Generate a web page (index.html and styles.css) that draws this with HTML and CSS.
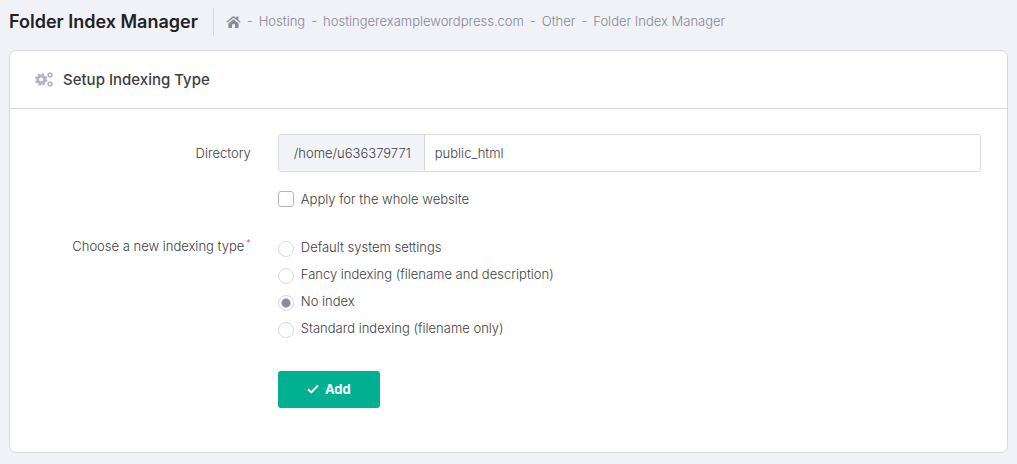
FILE: index.html
```html
<!DOCTYPE html>
<html lang="en">
<head>
    <meta charset="UTF-8">
    <meta name="viewport" content="width=device-width, initial-scale=1.0">
    <title>Folder Index Manager</title>
    <link rel="stylesheet" href="styles.css">
</head>
<body>

<header class="subheader">
    <h1 class="page-title">Folder Index Manager</h1>
    <nav class="breadcrumbs" aria-label="Breadcrumb">
        <a href="#" class="home-link" aria-label="Home">
            <svg class="home-icon" viewBox="0 0 16 13">
                <path d="M8 3.6 13.6 8.2V12.2Q13.6 13 12.8 13H9.6V9H6.4V13H3.2Q2.4 13 2.4 12.2V8.2Z"/>
                <path d="M8 0.2Q8.5 0.2 9 0.6L11 2.3V0.6H13.3V4.2L15.8 6.3 15 7.4 8 1.8 1 7.4 0.2 6.3 7 0.6Q7.5 0.2 8 0.2Z"/>
            </svg>
        </a>
        <span>-</span>
        <a href="#">Hosting</a>
        <span>-</span>
        <a href="#">hostingerexamplewordpress.com</a>
        <span>-</span>
        <a href="#">Other</a>
        <span>-</span>
        <a href="#">Folder Index Manager</a>
    </nav>
</header>

<main class="card">
    <div class="card-header">
        <svg class="cogs-icon" viewBox="0 0 18 15">
            <!-- big cog -->
            <circle cx="6.2" cy="7.5" r="3.5" fill="none" stroke-width="2.8"/>
            <circle cx="6.2" cy="7.5" r="5.3" fill="none" stroke-width="1.8" stroke-dasharray="2.5 1.66"/>
            <!-- small cogs -->
            <circle cx="15" cy="3" r="1.8" fill="none" stroke-width="1.4"/>
            <circle cx="15" cy="3" r="2.6" fill="none" stroke-width="0.8" stroke-dasharray="1.36 1.36"/>
            <circle cx="15" cy="12" r="1.8" fill="none" stroke-width="1.4"/>
            <circle cx="15" cy="12" r="2.6" fill="none" stroke-width="0.8" stroke-dasharray="1.36 1.36"/>
        </svg>
        <h2>Setup Indexing Type</h2>
    </div>

    <form class="card-body">
        <div class="form-row">
            <label class="form-label" for="directory">Directory</label>
            <div class="input-group">
                <span class="input-prefix">/home/u636379771</span>
                <input type="text" id="directory" value="public_html">
            </div>
        </div>

        <div class="form-row">
            <label class="option field">
                <input type="checkbox" name="whole_website">
                Apply for the whole website
            </label>
        </div>

        <div class="form-row" role="radiogroup" aria-labelledby="type-label">
            <div class="form-label type-label" id="type-label">Choose a new indexing type<sup>*</sup></div>
            <div class="field radio-list">
                <label class="option"><input type="radio" name="type" value="default">Default system settings</label>
                <label class="option"><input type="radio" name="type" value="fancy">Fancy indexing (filename and description)</label>
                <label class="option"><input type="radio" name="type" value="none" checked>No index</label>
                <label class="option"><input type="radio" name="type" value="standard">Standard indexing (filename only)</label>
            </div>
        </div>

        <div class="form-row">
            <div class="field">
                <button type="button" class="btn-add">
                    <svg class="check-icon" viewBox="0 0 12 10"><path d="M1 5.2 4.3 8.4 11 1.4"/></svg>
                    Add
                </button>
            </div>
        </div>
    </form>
</main>

</body>
</html>
```
FILE: styles.css
```css
* {
    box-sizing: border-box;
}

body {
    margin: 0;
    padding: 8px 9px 11px;
    background-color: #f1f2f7;
    color: #3d3e43;
    font-family: Inter, "Open Sans", sans-serif;
    font-size: 13px;
    font-weight: 300;
    line-height: 20px;
}

/* Title and breadcrumbs */
.subheader {
    display: flex;
    align-items: center;
    height: 28px;
    margin-bottom: 14px;
}

.page-title {
    margin: 0;
    padding-right: 15px;
    border-right: 1px solid #d6d7dd;
    color: #212226;
    font-size: 18px;
    font-weight: 600;
    line-height: 28px;
}

.breadcrumbs {
    display: flex;
    align-items: center;
    gap: 6px;
    padding-left: 12px;
    padding-bottom: 3px;
    color: #868792;
}

.breadcrumbs a {
    color: inherit;
    text-decoration: none;
}

.home-link {
    display: flex;
    padding-top: 3px;
}

.home-icon {
    width: 15px;
    height: 12px;
    fill: #8b8c9a;
}

/* Card */
.card {
    background-color: #fff;
    border: 1px solid #d9d9dc;
    border-radius: 7px;
}

.card-header {
    display: flex;
    align-items: center;
    gap: 10px;
    height: 58px;
    padding: 0 25px;
    border-bottom: 1px solid #d9d9dc;
}

.card-header h2 {
    margin: 0;
    color: #3d3e43;
    font-size: 15px;
    font-weight: 500;
}

.cogs-icon {
    width: 18px;
    height: 15px;
    stroke: #b3b2cb;
}

.card-body {
    padding: 25px 26px 44px;
}

.form-row {
    display: grid;
    grid-template-columns: 234fr 766fr;
    column-gap: 27px;
}

.form-label {
    text-align: right;
    line-height: 38px;
}

.field {
    grid-column: 2;
}

.input-group {
    display: flex;
    height: 38px;
    border: 1px solid #d9d9dc;
    border-radius: 3px;
    overflow: hidden;
}

.input-prefix {
    padding: 0 13px 0 15px;
    background-color: #f3f4f9;
    border-right: 1px solid #d9d9dc;
    line-height: 36px;
}

.input-group input {
    flex: 1;
    min-width: 0;
    padding: 0 10px;
    border: 0;
    outline: 0;
    background-color: #fff;
    color: inherit;
    font: inherit;
}

.option {
    display: flex;
    align-items: center;
    gap: 7px;
    line-height: 20px;
}

.field.option {
    margin: 17px 0;
}

.option input {
    flex: none;
    appearance: none;
    width: 16px;
    height: 16px;
    margin: 0;
    border: 1px solid #b3b2cb;
    border-radius: 3px;
    background-color: #fff;
}

.option input[type="checkbox"]:checked {
    background-color: #8b8c9a;
}

.option input[type="radio"] {
    margin-top: 3px;
    border-color: #d9d9dc;
    border-radius: 50%;
}

.option input[type="radio"]:checked {
    background: radial-gradient(circle, #8b8c9a 0 4px, #fff 5px);
}

.type-label {
    margin-top: 10px;
    line-height: 20px;
}

.type-label sup {
    color: #fd397a;
    font-size: 9px;
    line-height: 0;
    margin-left: 2px;
}

.radio-list {
    display: flex;
    flex-direction: column;
    gap: 7px;
    margin-top: 11px;
    margin-bottom: 33px;
}

.btn-add {
    display: flex;
    align-items: center;
    justify-content: center;
    gap: 6px;
    width: 102px;
    height: 37px;
    padding: 0 0 2px;
    border: 0;
    border-radius: 3px;
    background-color: #00b090;
    color: #fff;
    font: inherit;
    font-weight: 700;
    cursor: pointer;
}

.check-icon {
    width: 12px;
    height: 10px;
    fill: none;
    stroke: #fff;
    stroke-width: 2;
}
```
